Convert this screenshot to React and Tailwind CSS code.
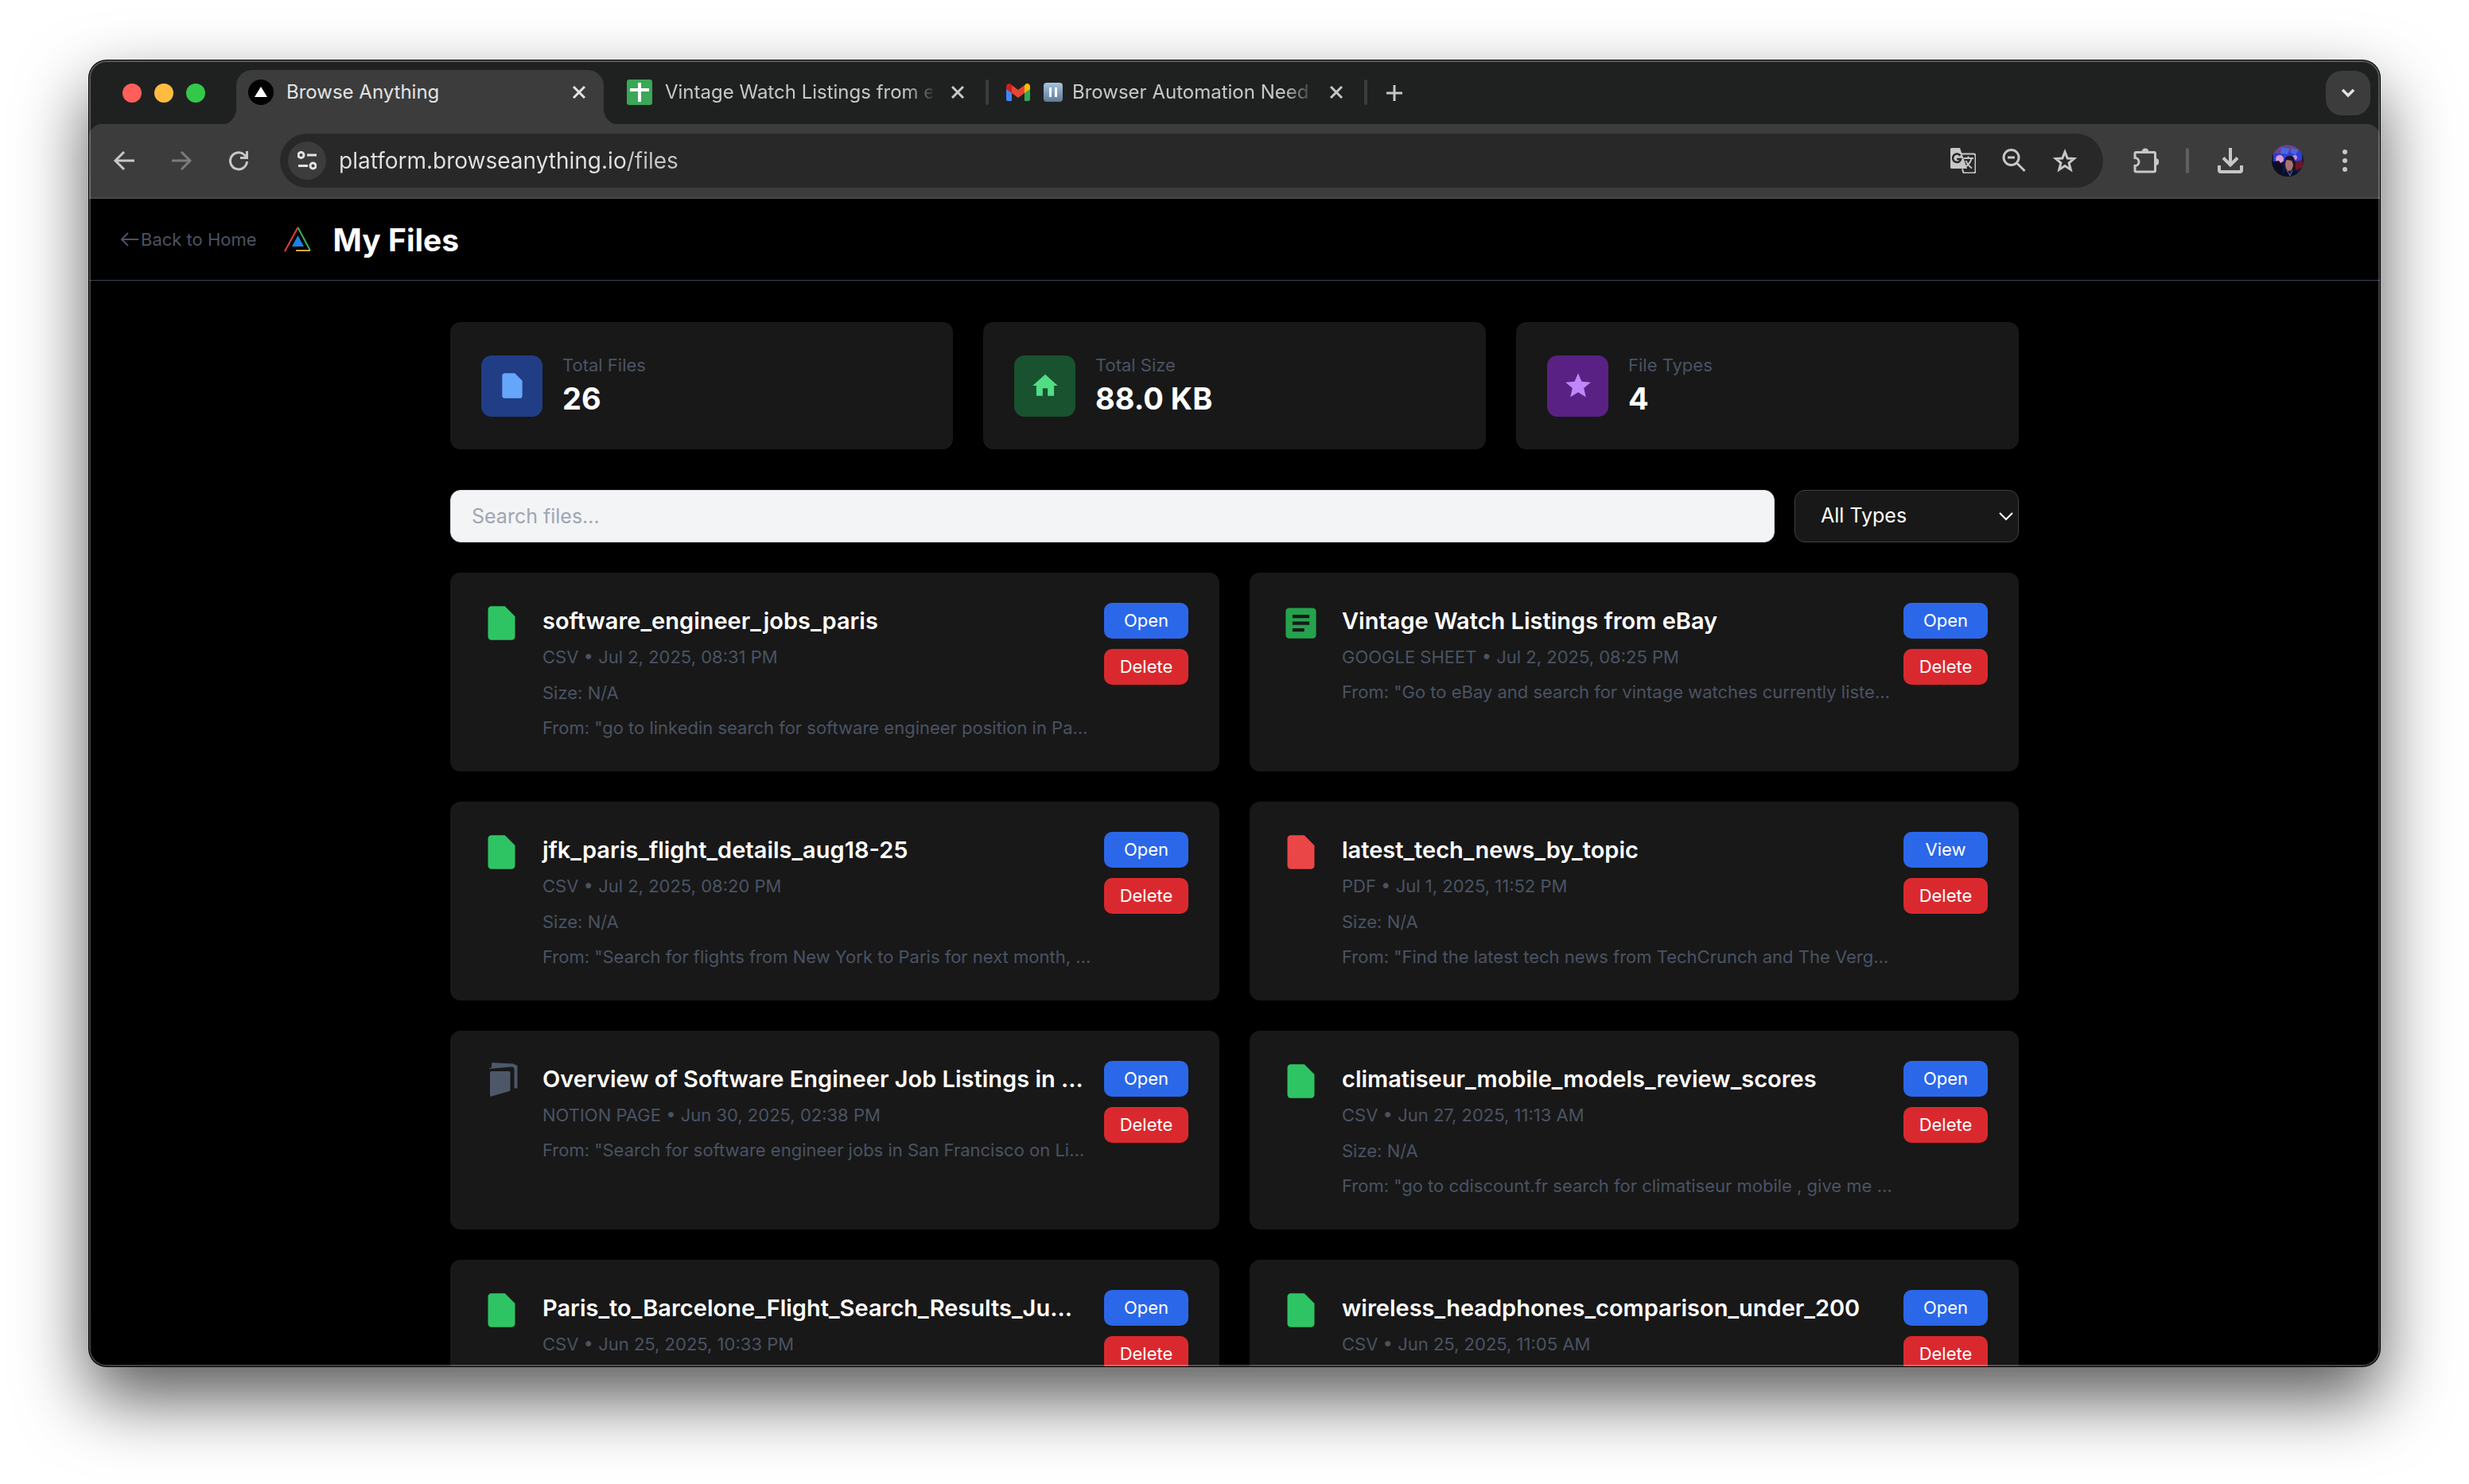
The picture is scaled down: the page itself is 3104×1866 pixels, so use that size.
import React from "react";

const TABS = [
  { title: "Browse Anything", icon: "browse", active: true },
  { title: "Vintage Watch Listings from e", icon: "sheets" },
  { title: "Browser Automation Need", icon: "gmail", paused: true },
];

const STATS = [
  { label: "Total Files", value: "26", tile: "bg-[#203d86] text-[#65a6fa]", shape: "M14 2H6c-1.1 0-1.99.9-1.99 2L4 20c0 1.1.89 2 1.99 2H18c1.1 0 2-.9 2-2V8l-6-6z" },
  { label: "Total Size", value: "88.0 KB", tile: "bg-[#18522f] text-[#51dd84]", shape: "M10 20v-6h4v6h5v-8h3L12 3 2 12h3v8z" },
  { label: "File Types", value: "4", tile: "bg-[#592183] text-[#bf87fa]", shape: "M12 17.27L18.18 21l-1.64-7.03L22 9.24l-7.19-.61L12 2 9.19 8.63 2 9.24l5.46 4.73L5.82 21z" },
];

const FILES = [
  { name: "software_engineer_jobs_paris", kind: "CSV", date: "Jul 2, 2025, 08:31 PM", size: "N/A", from: "go to linkedin search for software engineer position in Pa…", icon: "csv" },
  { name: "Vintage Watch Listings from eBay", kind: "GOOGLE SHEET", date: "Jul 2, 2025, 08:25 PM", from: "Go to eBay and search for vintage watches currently liste…", icon: "sheet" },
  { name: "jfk_paris_flight_details_aug18-25", kind: "CSV", date: "Jul 2, 2025, 08:20 PM", size: "N/A", from: "Search for flights from New York to Paris for next month, …", icon: "csv" },
  { name: "latest_tech_news_by_topic", kind: "PDF", date: "Jul 1, 2025, 11:52 PM", size: "N/A", from: "Find the latest tech news from TechCrunch and The Verg…", icon: "pdf", action: "View" },
  { name: "Overview of Software Engineer Job Listings in …", kind: "NOTION PAGE", date: "Jun 30, 2025, 02:38 PM", from: "Search for software engineer jobs in San Francisco on Li…", icon: "notion" },
  { name: "climatiseur_mobile_models_review_scores", kind: "CSV", date: "Jun 27, 2025, 11:13 AM", size: "N/A", from: "go to cdiscount.fr search for climatiseur mobile , give me …", icon: "csv" },
  { name: "Paris_to_Barcelone_Flight_Search_Results_Ju…", kind: "CSV", date: "Jun 25, 2025, 10:33 PM", icon: "csv" },
  { name: "wireless_headphones_comparison_under_200", kind: "CSV", date: "Jun 25, 2025, 11:05 AM", icon: "csv" },
];

function TabIcon({ name }) {
  if (name === "browse") {
    return (
      <svg viewBox="0 0 32 32" className="size-8 shrink-0" aria-hidden="true">
        <circle cx="16" cy="16" r="16" fill="#000" />
        <path d="M16 9l8 13H8z" fill="#fff" />
      </svg>
    );
  }
  if (name === "sheets") {
    return (
      <svg viewBox="0 0 32 32" className="size-8 shrink-0" aria-hidden="true">
        <rect width="32" height="32" rx="3" fill="#3ba757" />
        <path d="M14 4h4v7h10v4H18v13h-4V15H4v-4h10z" fill="#fff" />
      </svg>
    );
  }
  return (
    <svg viewBox="0 0 32 32" className="size-8 shrink-0" aria-hidden="true">
      <path d="M1 9v16a2 2 0 0 0 2 2h5V14z" fill="#4384f3" />
      <path d="M24 14v13h5a2 2 0 0 0 2-2V9z" fill="#34a753" />
      <path d="M24 8v9l7-5V9c0-4-4-5-6-3z" fill="#fabb05" />
      <path d="M8 17V7l8 6 8-6v10l-8 6z" fill="#e94435" />
      <path d="M1 9v3l7 5V7L7 6C5 4 1 5 1 9z" fill="#c5221f" />
    </svg>
  );
}

function Flare({ side }) {
  return (
    <svg viewBox="0 0 20 20" aria-hidden="true" className={side === "left" ? "absolute bottom-0 -left-5 size-5 text-[#3c3c3c]" : "absolute bottom-0 -right-5 size-5 -scale-x-100 text-[#3c3c3c]"}>
      <path d="M20 0v20H0A20 20 0 0 0 20 0z" fill="currentColor" />
    </svg>
  );
}

function BrowserTab({ tab }) {
  return (
    <div className="flex h-[69px] w-[476px] shrink-0 items-start">
      <div className={tab.active ? "relative flex h-full min-w-0 flex-1 rounded-t-[20px] bg-[#3c3c3c] text-[#e3e3e3]" : "flex h-full min-w-0 flex-1 text-[#c7c7c7]"}>
        {tab.active && <Flare side="left" />}
        {tab.active && <Flare side="right" />}
        <div className="flex h-14 min-w-0 flex-1 items-center gap-4 pr-[11px] pl-[15px]">
          <TabIcon name={tab.icon} />
          <span className={tab.active ? "flex-1 text-2xl whitespace-nowrap" : "flex min-w-0 flex-1 items-center gap-3 text-2xl whitespace-nowrap [mask-image:linear-gradient(to_right,black_90%,transparent_102%)]"}>
            {tab.paused && (
              <svg viewBox="0 0 24 24" className="size-6 shrink-0" aria-hidden="true">
                <defs>
                  <linearGradient id="pause" x1="0" y1="0" x2="0" y2="1">
                    <stop offset="0" stopColor="#a9c3de" />
                    <stop offset="1" stopColor="#5c7b98" />
                  </linearGradient>
                </defs>
                <rect width="24" height="24" rx="4" fill="url(#pause)" />
                <path d="M7 6h3v12H7zM14 6h3v12h-3z" fill="#fff" />
              </svg>
            )}
            {tab.title}
          </span>
          <button type="button" aria-label={"Close " + tab.title} className="-ml-1 flex size-10 shrink-0 items-center justify-center">
            <svg viewBox="0 0 16 16" className="size-4" aria-hidden="true">
              <path d="M1 1l14 14M15 1L1 15" stroke="currentColor" strokeWidth="3" />
            </svg>
          </button>
        </div>
      </div>
      <div className="flex h-14 w-[14px] items-center pl-1">
        {!tab.active && <span className="h-8 w-1 rounded-full bg-[#3c3c3c]" />}
      </div>
    </div>
  );
}

function Icon32({ children, label, dim }) {
  return (
    <button type="button" aria-label={label} className={dim ? "flex size-8 shrink-0 text-[#7b7b7b]" : "flex size-8 shrink-0 text-[#c7c7c7]"}>
      <svg viewBox="0 0 32 32" fill="none" stroke="currentColor" strokeWidth="3" className="size-8" aria-hidden="true">
        {children}
      </svg>
    </button>
  );
}

function Toolbar() {
  return (
    <div className="-mt-px flex h-[94px] items-center rounded-t-2xl border-b-2 border-[#474747] bg-[#3c3c3c] px-7">
      <div className="flex w-[212px] gap-10">
        <Icon32 label="Back"><path d="M29 16H6M16 5L5 16l11 11" /></Icon32>
        <Icon32 label="Forward" dim><path d="M4 16h22M16 5l11 11-11 11" /></Icon32>
        <Icon32 label="Reload">
          <path d="M26.5 17A10.5 10.5 0 1 1 23 8.500L26 11.5" />
          <path d="M26.5 4v8.500H18" />
        </Icon32>
      </div>
      <div className="flex h-[68px] flex-1 items-center rounded-full bg-[#282828] pr-8 pl-[10px]">
        <button type="button" aria-label="Site information" className="flex size-12 items-center justify-center rounded-full bg-[#3c3c3c] text-[#e3e3e3]">
          <svg viewBox="0 0 24 24" fill="none" stroke="currentColor" strokeWidth="3" className="size-6" aria-hidden="true">
            <circle cx="4.5" cy="5" r="3.5" />
            <path d="M12 5h12M1 18.5h12" />
            <circle cx="19.5" cy="18.5" r="3.5" />
          </svg>
        </button>
        <input
          type="text"
          aria-label="Address"
          defaultValue="platform.browseanything.io/files"
          className="min-w-0 flex-1 bg-[linear-gradient(to_right,#e3e3e3_377px,#c7c7c7_377px)] bg-clip-text pl-4 text-[28px] leading-9 text-transparent caret-white outline-none"
        />
        <div className="flex gap-8">
          <Icon32 label="Translate">
            <path d="M2 0h10l9 26H2a2.500 2.500 0 0 1-2.500-2.500v-21A2.500 2.500 0 0 1 2 0z" fill="currentColor" stroke="none" />
            <path d="M14 7.500h15a2.500 2.500 0 0 1 2.500 2.500v19a2.500 2.500 0 0 1-2.500 2.500H16.500l-1.500-5" strokeWidth="2" />
            <path d="M12.500 9.800a5.200 5.200 0 1 0 .800 4.200H8.200" stroke="#282828" strokeWidth="2.5" />
            <path d="M17 13h12M22.500 10.500V13M26.500 13.500c-1 4-4 8-8.500 11M19.500 16c1.500 4 4 7 7.500 9.500" strokeWidth="2" />
          </Icon32>
          <Icon32 label="Zoom">
            <circle cx="12.5" cy="12" r="9.5" />
            <path d="M19 18.500L29.500 29M8 12h9" />
          </Icon32>
          <Icon32 label="Bookmark this page">
            <path d="M16 5l3.200 8 8.300.600-6.400 5.300 2.100 8.300L16 22.600l-7.200 4.600 2.100-8.300-6.400-5.300 8.300-.6z" />
          </Icon32>
        </div>
      </div>
      <div className="flex items-center pl-[38px]">
        <Icon32 label="Extensions">
          <path d="M3.500 5.500h23a1.500 1.500 0 0 1 1 1v22a1.500 1.500 0 0 1-1.500 1.500H3.500A1.500 1.500 0 0 1 2 28.500V22.500a5 5 0 0 0 0-10V7a1.500 1.500 0 0 1 1.500-1.500z" />
          <path d="M10.500 5a4.500 4.500 0 0 1 9 0zM28 13a4.500 4.500 0 0 1 0 9z" fill="currentColor" stroke="none" />
        </Icon32>
        <span className="mr-9 ml-[34px] h-8 w-1 rounded-full bg-[#5f5f5f]" />
        <Icon32 label="Downloads">
          <path d="M16 0v20M7 12.500l9 9 9-9" strokeWidth="4" />
          <path d="M2 22v6a2 2 0 0 0 2 2h24a2 2 0 0 0 2-2v-6" strokeWidth="4" />
        </Icon32>
        <button type="button" aria-label="Profile" className="mx-9 size-10 overflow-hidden rounded-full">
          <svg viewBox="0 0 40 40" className="size-10" aria-hidden="true">
            <rect width="40" height="40" fill="#14163f" />
            <path d="M0 0h40v9L0 12z" fill="#6a4391" />
            <path d="M2 12L38 7v14H2z" fill="#2f3fd2" />
            <path d="M12 3l10 2-2 7-9-1zM25 4l8 3-3 6-6-3z" fill="#4967dd" />
            <circle cx="10" cy="18" r="5" fill="#dc9bd0" />
            <circle cx="29" cy="16" r="3" fill="#c58be0" />
            <path d="M0 22l9-2 5 8v12H0z" fill="#0b0d24" />
            <path d="M29 22l9-3 2 9-10 4z" fill="#6b1726" />
            <ellipse cx="22" cy="25" rx="5" ry="8" fill="#a9736d" />
            <path d="M16 22c0-6 3-8 7-8 5 0 7 4 5 10l-2-4-7-1z" fill="#1a1224" />
            <path d="M24 20c4 3 4 8 1 12l4-2 1-8z" fill="#1a1224" />
            <path d="M11 40l7-8 5 6 5-7 9 9z" fill="#0a0f29" />
            <path d="M19 32l4 7 3-7" fill="none" stroke="#6277ae" strokeWidth="1" />
          </svg>
        </button>
        <Icon32 label="Menu">
          <g fill="currentColor" stroke="none">
            <circle cx="16" cy="5" r="3" />
            <circle cx="16" cy="16" r="3" />
            <circle cx="16" cy="27" r="3" />
          </g>
        </Icon32>
      </div>
    </div>
  );
}

function FileIcon({ name }) {
  if (name === "notion") {
    return (
      <svg viewBox="0 0 51 51" className="size-[51px] text-[#4d5768]" fill="currentColor" aria-hidden="true">
        <path d="M11 14.500q0-1.500 1.500-1.500H35q1.500 0 1.500 1.500v22q0 1-1 1.500L13 44.500q-2 .500-2-1z" />
        <path d="M13 3.500q0-1.500 1.500-1.300L40 3.500l5.500 2.500v27q0 1.500-1.500 1.500h-2.500V11q0-3.500-3.500-3.500L10 10v-.800l3-.700z" />
      </svg>
    );
  }
  if (name === "sheet") {
    return (
      <svg viewBox="0 0 24 24" className="size-[51px] text-[#25a24d]" fill="currentColor" aria-hidden="true">
        <path d="M19 3H5c-1.100 0-2 .9-2 2v14c0 1.100.9 2 2 2h14c1.100 0 2-.9 2-2V5c0-1.100-.9-2-2-2zm-5 14H7v-2h7v2zm3-4H7v-2h10v2zm0-4H7V7h10v2z" />
      </svg>
    );
  }
  return (
    <svg viewBox="0 0 24 24" className={name === "pdf" ? "size-[51px] text-[#eb4647]" : "size-[51px] text-[#2fc463]"} fill="currentColor" aria-hidden="true">
      <path d={STATS[0].shape} />
    </svg>
  );
}

function FileCard({ file }) {
  return (
    <li className="flex min-h-[250px] items-start rounded-[13px] bg-[#181818] px-[39px] py-[38px]">
      <div className="mr-[26px] shrink-0"><FileIcon name={file.icon} /></div>
      <div className="min-w-0 flex-1 text-[22px] leading-8 whitespace-nowrap text-[#4a5363]">
        <h3 className="text-[29px] leading-[46px] font-semibold text-white">{file.name}</h3>
        <p className="mt-[6px]">{file.kind} • {file.date}</p>
        {file.size && <p className="mt-[13px]">Size: {file.size}</p>}
        {file.from && <p className="mt-3">From: "{file.from}</p>}
      </div>
      <div className="ml-3 flex w-[106px] shrink-0 flex-col gap-[13px] text-[22px] leading-[45px] text-white">
        <button type="button" className="rounded-[10px] bg-[#2b67e9]">{file.action || "Open"}</button>
        <button type="button" className="rounded-[10px] bg-[#da292e]">Delete</button>
      </div>
    </li>
  );
}

export default function App() {
  return (
    <div className="h-screen overflow-hidden bg-white px-28 pt-[76px] pb-[148px] font-['Inter','Liberation_Sans',sans-serif]">
      <div className="relative flex h-full flex-col overflow-hidden rounded-[22px] bg-[#1f2120] shadow-[0_0_0_1px_#000,0_40px_88px_rgba(0,0,0,0.66)]">
        <div className="flex h-[81px] shrink-0 items-end">
          <div className="flex h-full w-[185px] shrink-0 items-center gap-4 pl-[42px]">
            <button type="button" aria-label="Close window" className="size-6 rounded-full bg-[#ff5f5a]" />
            <button type="button" aria-label="Minimize window" className="size-6 rounded-full bg-[#ffbc40]" />
            <button type="button" aria-label="Zoom window" className="size-6 rounded-full bg-[#33c84a]" />
          </div>
          {TABS.map((tab) => <BrowserTab key={tab.title} tab={tab} />)}
          <button type="button" aria-label="New tab" className="mb-3 flex size-14 items-center justify-center text-[#c7c7c7]">
            <svg viewBox="0 0 20 20" className="size-5" aria-hidden="true"><path d="M10 0v20M0 10h20" stroke="currentColor" strokeWidth="3" /></svg>
          </button>
          <button type="button" aria-label="Search tabs" className="mr-3 mb-3 ml-auto flex size-14 items-center justify-center rounded-[20px] bg-[#3c3c3c] text-[#e3e3e3]">
            <svg viewBox="0 0 18 12" className="h-3 w-[18px]" aria-hidden="true"><path d="M2 2l7 7 7-7" fill="none" stroke="currentColor" strokeWidth="3.5" /></svg>
          </button>
        </div>
        <Toolbar />
        <div className="min-h-0 flex-1 overflow-hidden bg-black text-white">
          <header className="flex h-[103px] items-center border-b border-[#3a4352] px-[39px]">
            <a href="#home" className="flex items-center gap-[2px] text-[22px] text-[#4a5363]">
              <svg viewBox="0 0 24 18" className="h-[18px] w-6" fill="none" stroke="currentColor" strokeWidth="2" aria-hidden="true"><path d="M23 9H3M10 1L2 9l8 8" /></svg>
              Back to Home
            </a>
            <svg viewBox="0 0 38 38" className="mr-[25px] ml-[33px] size-[38px]" fill="none" strokeWidth="2" aria-hidden="true">
              <path d="M2 34L18.500 4" stroke="#e23b41" />
              <path d="M18.500 4L34 33" stroke="#38b259" />
              <path d="M16 33h18" stroke="#e6a530" />
              <path d="M18.500 14L26 28H11z" fill="#1b83e2" />
            </svg>
            <h1 className="text-[39px] leading-[51px] font-bold">My Files</h1>
          </header>
          <main className="mx-auto max-w-[2048px] px-[38px] pt-[52px]">
            <section aria-label="Totals" className="grid grid-cols-3 gap-[38px]">
              {STATS.map((s) => (
                <div key={s.label} className="flex items-center gap-[25px] rounded-[13px] bg-[#181818] px-[39px] py-[38px]">
                  <div className={"flex size-[77px] items-center justify-center rounded-[13px] " + s.tile}>
                    <svg viewBox="0 0 24 24" className="size-[38px]" fill="currentColor" aria-hidden="true"><path d={s.shape} /></svg>
                  </div>
                  <div>
                    <p className="text-[22px] leading-8 text-[#4a5363]">{s.label}</p>
                    <p className="text-[38px] leading-[52px] font-bold">{s.value}</p>
                  </div>
                </div>
              ))}
            </section>
            <form className="mt-[51px] flex gap-[25px]">
              <input type="search" aria-label="Search files" placeholder="Search files..." className="h-[66px] min-w-0 flex-1 rounded-[13px] border border-[#d3d6dc] bg-[#f3f4f6] px-[26px] text-[25px] text-black placeholder:text-[#9fa6b3]" />
              <div className="relative w-[282px]">
                <select aria-label="File type" className="h-[66px] w-full appearance-none rounded-[13px] border border-[#404042] bg-[#181818] px-8 text-[25px] text-white">
                  <option>All Types</option>
                </select>
                <svg viewBox="0 0 18 12" className="pointer-events-none absolute top-[27px] right-[7px] h-3 w-[18px]" fill="none" stroke="#fff" strokeWidth="2" aria-hidden="true"><path d="M1 2l8 8 8-8" /></svg>
              </div>
            </form>
            <ul className="mt-[38px] grid grid-cols-2 gap-[38px]">
              {FILES.map((f) => <FileCard key={f.name} file={f} />)}
            </ul>
          </main>
        </div>
        <div className="pointer-events-none absolute inset-0 rounded-[22px] border-2 border-white/25" />
      </div>
    </div>
  );
}
